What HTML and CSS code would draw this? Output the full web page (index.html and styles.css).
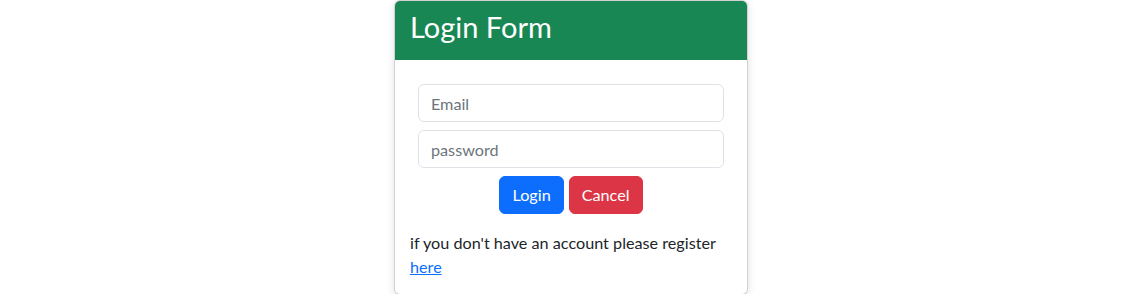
FILE: index.html
```html
<!DOCTYPE html>
<html>
<head>
<meta charset="utf-8">
<link rel="stylesheet" href="styles.css">
</head>
<body>
<div class="page">
  <div class="card">
    <div class="card-header">Login Form</div>
    <div class="card-body">
      <form class="form">
        <input class="input" type="text" placeholder="Email">
        <input class="input" type="password" placeholder="password">
        <div class="actions">
          <button type="button" class="btn btn-primary">Login</button>
          <button type="button" class="btn btn-danger">Cancel</button>
        </div>
      </form>
      <p class="note">if you don't have an account please register <a href="#" class="link">here</a></p>
    </div>
  </div>
</div>
</body>
</html>
```

FILE: styles.css
```css
* { box-sizing: border-box; }
html, body { margin: 0; padding: 0; background: #fff; }
body {
  font-family: Lato, "Noto Sans", sans-serif;
  font-size: 16.2px;
  line-height: 1.5;
  color: #212529;
}
.page {
  display: flex;
  justify-content: center;
  padding-left: 2px;
}
.card {
  width: 354px;
  border: 1px solid rgba(0,0,0,.175);
  border-radius: 6px;
  box-shadow: 0 2px 8px rgba(0,0,0,.12);
  overflow: hidden;
  background: #fff;
}
.card-header {
  background: #198754;
  color: #fff;
  font-size: 29px;
  line-height: 1.2;
  padding: 9px 15px 15px;
  height: 59px;
}
.card-body {
  padding: 16px 15px 14px;
}
.form {
  padding: 8px 8px 8px;
  display: flex;
  flex-direction: column;
  gap: 8px;
}
.input {
  display: block;
  width: 100%;
  height: 38px;
  padding: 6px 12px;
  font: inherit;
  color: #212529;
  border: 1px solid #dee2e6;
  border-radius: 6px;
  outline: none;
}
.input::placeholder { color: #6c757d; }
.actions {
  display: flex;
  justify-content: center;
  gap: 5px;
}
.btn {
  height: 38px;
  padding: 6px 12px;
  font: inherit;
  color: #fff;
  border: 1px solid transparent;
  border-radius: 6px;
  cursor: pointer;
}
.btn-primary { background: #0d6efd; border-color: #0d6efd; }
.btn-danger { background: #dc3545; border-color: #dc3545; }
.note {
  margin: 9px 0 0;
}
.link { color: #0d6efd; text-decoration: underline; }
```
